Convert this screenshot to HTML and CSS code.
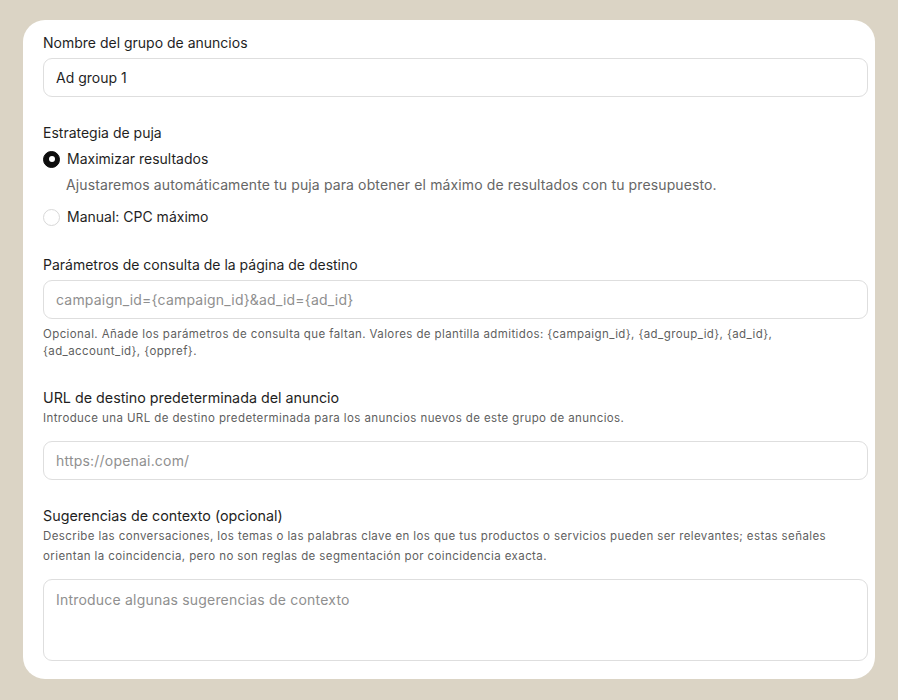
FILE: index.html
```html
<!DOCTYPE html>
<html lang="es">
<head>
<meta charset="utf-8">
<title>Grupo de anuncios</title>
<link rel="stylesheet" href="styles.css">
</head>
<body>
<div class="card">
  <section class="field first">
    <label class="label" for="name">Nombre del grupo de anuncios</label>
    <input class="input" id="name" type="text" value="Ad group 1">
  </section>

  <section class="field">
    <div class="label">Estrategia de puja</div>
    <div class="radio-list">
      <div class="radio-row">
        <span class="radio checked"></span>
        <span class="radio-text">Maximizar resultados</span>
      </div>
      <div class="radio-desc">Ajustaremos automáticamente tu puja para obtener el máximo de resultados con tu presupuesto.</div>
      <div class="radio-row second">
        <span class="radio"></span>
        <span class="radio-text">Manual: CPC máximo</span>
      </div>
    </div>
  </section>

  <section class="field wide">
    <label class="label" for="params">Parámetros de consulta de la página de destino</label>
    <input class="input" id="params" type="text" placeholder="campaign_id={campaign_id}&amp;ad_id={ad_id}">
    <p class="help">Opcional. Añade los parámetros de consulta que faltan. Valores de plantilla admitidos: {campaign_id}, {ad_group_id}, {ad_id}, {ad_account_id}, {oppref}.</p>
  </section>

  <section class="field wide">
    <label class="label big" for="url">URL de destino predeterminada del anuncio</label>
    <p class="sub">Introduce una URL de destino predeterminada para los anuncios nuevos de este grupo de anuncios.</p>
    <input class="input" id="url" type="text" placeholder="https://openai.com/">
  </section>

  <section class="field last">
    <label class="label big" for="ctx">Sugerencias de contexto (opcional)</label>
    <p class="sub">Describe las conversaciones, los temas o las palabras clave en los que tus productos o servicios pueden ser relevantes; estas señales orientan la coincidencia, pero no son reglas de segmentación por coincidencia exacta.</p>
    <textarea class="textarea" id="ctx" placeholder="Introduce algunas sugerencias de contexto"></textarea>
  </section>
</div>
</body>
</html>
```

FILE: styles.css
```css
* { box-sizing: border-box; }

html, body {
  margin: 0;
  height: 100%;
}

body {
  background: #dbd4c5;
  padding: 20px 23px 21px 23px;
  font-family: Inter, "Noto Sans", "Liberation Sans", sans-serif;
  color: #1f1f1f;
}

.card {
  background: #ffffff;
  border-radius: 22px;
  padding: 13px 7px 18px 20px;
  display: flex;
  flex-direction: column;
}

.field {
  display: flex;
  flex-direction: column;
  margin-top: 26px;
}

.field.wide { margin-top: 28px; }

.field.last { margin-top: 26px; }

.field.first { margin-top: 0; }

.label {
  display: block;
  font-size: 14px;
  line-height: 20px;
  color: #1f1f1f;
  margin-bottom: 5px;
}

.label.big {
  font-size: 14.3px;
  margin-bottom: 0;
}

.input {
  height: 39px;
  width: 100%;
  border: 1px solid #dedede;
  border-radius: 9px;
  padding: 0 12px;
  font-family: inherit;
  font-size: 14px;
  color: #1f1f1f;
  background: #fff;
  outline: none;
}

.input::placeholder,
.textarea::placeholder {
  color: #8f8f8f;
  opacity: 1;
  letter-spacing: 0.2px;
}

.textarea {
  height: 82px;
  width: 100%;
  border: 1px solid #dedede;
  border-radius: 9px;
  padding: 10px 12px;
  font-family: inherit;
  font-size: 14px;
  line-height: 20px;
  color: #1f1f1f;
  resize: none;
  outline: none;
  display: block;
}

.radio-list {
  display: flex;
  flex-direction: column;
  margin-top: 1px;
}

.radio-row {
  display: flex;
  align-items: center;
  gap: 7px;
  height: 20px;
}

.radio-row.second { margin-top: 12px; }

.radio {
  width: 17px;
  height: 17px;
  border-radius: 50%;
  border: 1px solid #d8d8d8;
  background: #fff;
  flex: none;
  position: relative;
}

.radio.checked {
  background: #0d0d0d;
  border-color: #0d0d0d;
}

.radio.checked::after {
  content: "";
  position: absolute;
  left: 50%;
  top: 50%;
  width: 6px;
  height: 6px;
  margin: -3px 0 0 -3px;
  border-radius: 50%;
  background: #fff;
}

.radio-text {
  font-size: 14px;
  line-height: 20px;
  color: #1f1f1f;
}

.radio-desc {
  margin: 6px 0 0 23px;
  font-size: 14px;
  line-height: 20px;
  letter-spacing: 0.12px;
  color: #666666;
}

.help {
  margin: 7px 0 0 0;
  font-size: 11.5px;
  line-height: 17px;
  letter-spacing: 0.4px;
  color: #5f5f5f;
  max-width: 800px;
}

.sub {
  margin: 0 0 13px 0;
  font-size: 11.5px;
  line-height: 20px;
  letter-spacing: 0.4px;
  color: #5f5f5f;
  max-width: 800px;
}
```
